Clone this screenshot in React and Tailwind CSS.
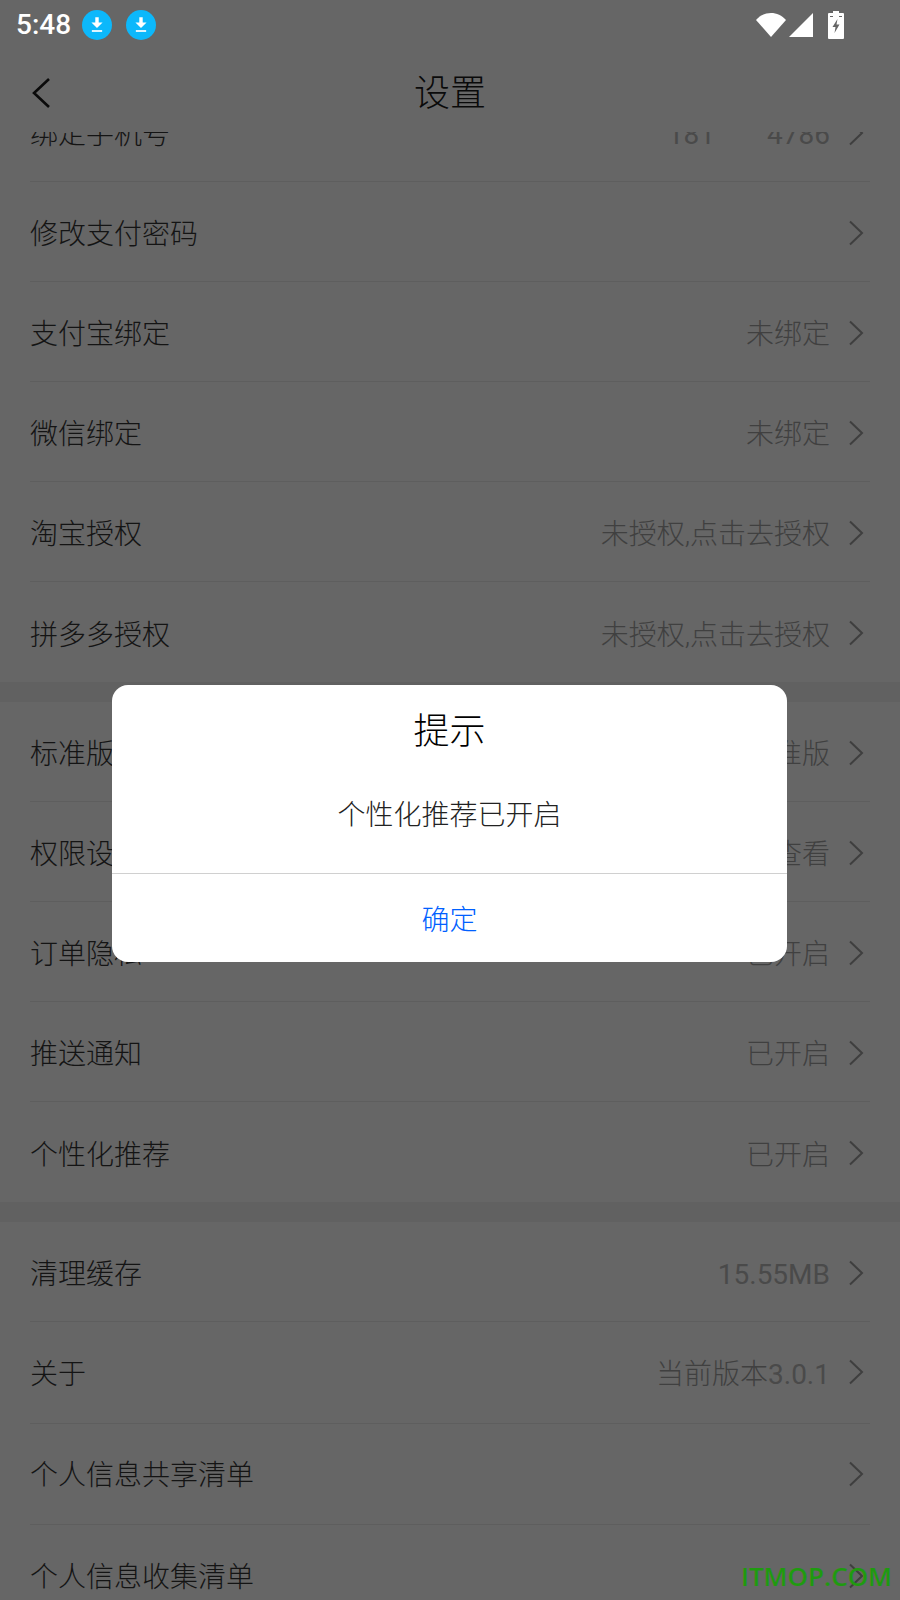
import React from "react";

const F = { fontFamily: '"Roboto", "Noto Sans CJK SC", sans-serif' };

function Chev({ tall }) {
  return (
    <svg width="16" height="26" viewBox="0 0 16 26" fill="none" className={"ml-[18px] mr-[6px] shrink-0 " + (tall ? "" : "mt-[2px]")}>
      <path d="M2 1.5 L14 13 L2 24.5" stroke="#3f3f3f" strokeWidth="2" />
    </svg>
  );
}

function Row({ label, value, last, tall }) {
  const pad = tall ? "pt-[5px]" : "pt-[7px]";
  return (
    <div className={"mx-[30px] flex items-center " + (tall ? "h-[101.5px] " : "h-[100px] ") + (last ? "" : "border-b border-[#5e5e5e]")}>
      <span className={"text-[28px] font-light text-[#141414] flex-1 whitespace-nowrap " + pad}>{label}</span>
      {value && <span className={"text-[28px] font-light text-[#404040] whitespace-nowrap " + pad}>{value}</span>}
      <Chev tall={tall} />
    </div>
  );
}

function Dl() {
  return (
    <div className="w-[30px] h-[30px] rounded-full bg-[#0cb8fb] flex items-center justify-center">
      <svg width="12" height="16" viewBox="0 0 14 18" fill="#fff">
        <path d="M5 0h4v6h4.5L7 12.5 0.5 6H5z" />
        <rect x="1" y="15" width="12" height="2" />
      </svg>
    </div>
  );
}

export default function App() {
  return (
    <div className="relative w-[900px] h-[1600px] overflow-hidden bg-[#666666]" style={F}>
      <div className="h-[50px] flex items-center pl-[16px] pr-[56px]">
        <span className="text-[28px] font-medium text-white mr-[11px]" style={{ fontFamily: "Roboto, sans-serif" }}>5:48</span>
        <Dl />
        <div className="w-[14px]" />
        <Dl />
        <div className="flex-1" />
        <svg width="32" height="26" viewBox="0 0 32 26" fill="#fff" className="mr-[1px]">
          <path d="M1 8 C9 -1.5 23 -1.5 31 8 L16 25 Z" />
        </svg>
        <svg width="26" height="26" viewBox="0 0 26 26" fill="#fff" className="mr-[14px]">
          <path d="M25 1 V25 H1 Z" />
        </svg>
        <svg width="16" height="28" viewBox="0 0 16 28">
          <path fill="#fff" d="M5 0h6v2h4a1 1 0 0 1 1 1v24a1 1 0 0 1-1 1H1a1 1 0 0 1-1-1V3a1 1 0 0 1 1-1h4z" />
          <path fill="#666" d="M2 5h3v1H2zM11 5h3v1h-3zM9.5 8 L4.5 16 H7.5 L6.5 22 L11.5 13.5 H8.5 Z" />
        </svg>
      </div>

      <div className="relative h-[82px] flex items-center justify-center z-10 bg-[#666666]">
        <svg width="20" height="32" viewBox="0 0 20 32" fill="none" className="absolute left-[31px] top-[27px]">
          <path d="M18 2 L3 16 L18 30" stroke="#0a0a0a" strokeWidth="2.6" />
        </svg>
        <span className="text-[36px] font-light text-[#0a0a0a] leading-none mt-[6px]">设置</span>
      </div>

      <div className="mt-[-82px] pt-[82px]">
        <div className="mt-[-50px]">
          <div className="mx-[30px] h-[100px] flex items-center border-b border-[#5e5e5e]">
            <span className="text-[28px] font-light text-[#141414] flex-1 pt-[7px]">绑定手机号</span>
            <span className="text-[28px] text-[#4a4a4a] pt-[7px] flex">
              <span>181</span>
              <span className="w-[52px]" />
              <span>4786</span>
            </span>
            <Chev />
          </div>
        </div>
        <Row label="修改支付密码" />
        <Row label="支付宝绑定" value="未绑定" />
        <Row label="微信绑定" value="未绑定" />
        <Row label="淘宝授权" value="未授权,点击去授权" />
        <Row label="拼多多授权" value="未授权,点击去授权" last />
        <div className="h-[20px] bg-[#616161]" />
        <Row label="标准版" value="标准版" />
        <Row label="权限设置" value="点击查看" />
        <Row label="订单隐私" value="已开启" />
        <Row label="推送通知" value="已开启" />
        <Row label="个性化推荐" value="已开启" last />
        <div className="h-[20px] bg-[#616161]" />
        <Row label="清理缓存" value={<span className="font-normal text-[#4a4a4a]">15.55MB</span>} />
        <Row label="关于" value={<>当前版本<span className="font-normal text-[#4a4a4a]">3.0.1</span></>} tall />
        <Row label="个人信息共享清单" tall />
        <Row label="个人信息收集清单" tall last />
      </div>

      <div className="absolute left-[112px] top-[685px] w-[675px] h-[277px] bg-white rounded-[16px] flex flex-col">
        <div className="h-[88px] flex items-center justify-center text-[36px] font-light text-black pt-[6px]">提示</div>
        <div className="flex-1 flex items-start justify-center text-[28px] font-light text-[#222222] pt-[22px]">个性化推荐已开启</div>
        <div className="h-[89px] border-t border-[#d0d0d0] flex items-center justify-center text-[28px] font-light text-[#0060ff] pt-[5px]">确定</div>
      </div>

      <div className="absolute left-[741px] top-[1557px] text-[26px] font-semibold text-[#1f9a10]" style={{ fontFamily: '"Open Sans", sans-serif' }}>ITMOP.COM</div>
    </div>
  );
}
